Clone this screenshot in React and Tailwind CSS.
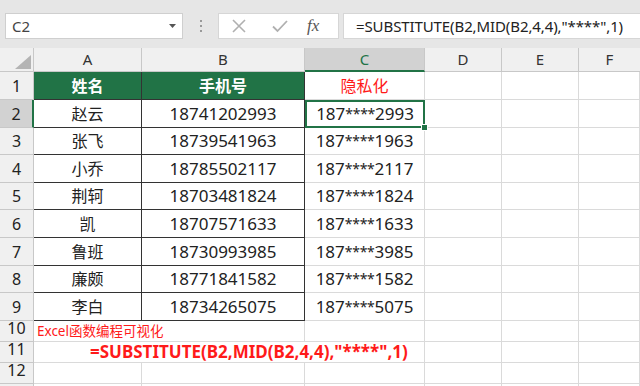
import React from "react";

const font = { fontFamily: '"Noto Sans", "Noto Sans CJK SC", sans-serif' };

const rows = [
  ["赵云", "18741202993", "2993"],
  ["张飞", "18739541963", "1963"],
  ["小乔", "18785502117", "2117"],
  ["荆轲", "18703481824", "1824"],
  ["凯", "18707571633", "1633"],
  ["鲁班", "18730993985", "3985"],
  ["廉颇", "18771841582", "1582"],
  ["李白", "18734265075", "5075"],
];
const heights = ["h-[28px]", "h-[27px]", "h-[28px]", "h-[27px]", "h-[28px]", "h-[28px]", "h-[27px]", "h-[28px]"];

function RowHead({ n, active, h }) {
  return (
    <div
      className={`w-[34px] shrink-0 ${h} flex items-end justify-center pb-[1px] border-r border-b border-[#c8c8c8] text-[16px] text-[#222] ${
        active ? "bg-[#d2d2d2] border-r-[#217346] border-r-2" : "bg-[#f0f0f0]"
      }`}
    >
      {n}
    </div>
  );
}

function Empty({ w, h }) {
  return <div className={`${w} shrink-0 ${h} border-r border-b border-[#dadada] bg-white`} />;
}

function Masked({ tail }) {
  return (
    <span className="whitespace-nowrap">
      187<span className="text-[14px] tracking-[-0.3px] relative top-[-1px]">****</span>
      {tail}
    </span>
  );
}

export default function App() {
  return (
    <div className="w-[640px] h-[386px] overflow-hidden bg-white text-[#111]" style={font}>
      {/* toolbar */}
      <div className="h-[48px] bg-[#e6e6e6] flex items-start pt-[13px] pl-[5px]">
        <div className="w-[178px] h-[26px] bg-white border border-[#cfcfcf] flex items-center justify-between pl-[6px] pr-[6px]">
          <span className="text-[15px] text-[#444]">C2</span>
          <svg width="7" height="4" viewBox="0 0 7 4">
            <path d="M0 0 L7 0 L3.5 4 Z" fill="#555" />
          </svg>
        </div>
        <div className="w-[35px] h-[26px] flex flex-col items-center justify-center gap-[3px]">
          <div className="w-[2px] h-[2px] bg-[#999]" />
          <div className="w-[2px] h-[2px] bg-[#999]" />
          <div className="w-[2px] h-[2px] bg-[#999]" />
        </div>
        <div className="w-[121px] h-[26px] bg-white border border-[#d6d6d6] flex items-center">
          <svg width="14" height="14" viewBox="0 0 14 14" className="ml-[13px]">
            <path d="M1 1 L13 13 M13 1 L1 13" stroke="#b0b0b0" strokeWidth="1.6" />
          </svg>
          <svg width="16" height="14" viewBox="0 0 16 14" className="ml-[26px]">
            <path d="M1 7.5 L5.5 12 L15 2" stroke="#b0b0b0" strokeWidth="1.8" fill="none" />
          </svg>
          <span
            className="ml-[19px] text-[17px] italic text-[#555]"
            style={{ fontFamily: '"Liberation Serif", "DejaVu Serif", serif' }}
          >
            fx
          </span>
        </div>
        <div className="ml-[4px] flex-1 h-[26px] bg-white border border-[#d6d6d6] border-r-0 flex items-center pl-[12px]">
          <span className="text-[15px] text-[#222] tracking-[-0.1px] whitespace-nowrap">
            =SUBSTITUTE(B2,MID(B2,4,4),"****",1)
          </span>
        </div>
      </div>

      {/* column headers */}
      <div className="flex h-[24px] bg-[#f0f0f0] text-[15px] text-[#333]">
        <div className="w-[34px] shrink-0 border-r border-b border-[#c8c8c8] flex items-end justify-end pr-[2px] pb-[2px]">
          <svg width="16" height="14" viewBox="0 0 16 14">
            <path d="M16 0 L16 14 L0 14 Z" fill="#b4b4b4" />
          </svg>
        </div>
        <div className="w-[108px] shrink-0 border-r border-b border-[#c8c8c8] flex items-center justify-center">A</div>
        <div className="w-[163px] shrink-0 border-r border-b border-[#c8c8c8] flex items-center justify-center">B</div>
        <div className="w-[120px] shrink-0 border-r border-b-2 border-[#c8c8c8] border-b-[#217346] bg-[#d2d2d2] flex items-center justify-center text-[#217346]">C</div>
        <div className="w-[77px] shrink-0 border-r border-b border-[#c8c8c8] flex items-center justify-center">D</div>
        <div className="w-[77px] shrink-0 border-r border-b border-[#c8c8c8] flex items-center justify-center">E</div>
        <div className="w-[61px] shrink-0 border-b border-[#c8c8c8] flex items-center justify-center">F</div>
      </div>

      {/* row 1 */}
      <div className="flex h-[28px]">
        <RowHead n={1} h="h-[28px]" />
        <div className="w-[108px] shrink-0 bg-[#217346] border-r border-b border-[#333] flex items-center justify-center text-white font-bold text-[16px]">姓名</div>
        <div className="w-[163px] shrink-0 bg-[#217346] border-r border-b border-[#333] flex items-center justify-center text-white font-bold text-[16px]">手机号</div>
        <div className="w-[120px] shrink-0 border-r border-b border-[#dadada] flex items-center justify-center text-[#ff1a1a] text-[16px]">隐私化</div>
        <Empty w="w-[77px]" h="h-[28px]" />
        <Empty w="w-[77px]" h="h-[28px]" />
        <Empty w="w-[61px]" h="h-[28px]" />
      </div>

      {rows.map((r, i) => {
        const h = heights[i];
        const sel = i === 0;
        return (
          <div key={i} className={`flex ${h}`}>
            <RowHead n={i + 2} active={sel} h={h} />
            <div className={`w-[108px] shrink-0 ${h} border-r border-b border-[#333] flex items-center justify-center text-[16px] text-[#222]`}>{r[0]}</div>
            <div className={`w-[163px] shrink-0 ${h} border-r border-b border-[#333] flex items-center justify-center text-[17px] text-[#222]`}>{r[1]}</div>
            {sel ? (
              <div className={`relative w-[120px] shrink-0 ${h} border-2 border-[#217346] flex items-center justify-center text-[17px] text-[#222]`}>
                <Masked tail={r[2]} />
                <div className="absolute right-[-5px] bottom-[-5px] w-[7px] h-[7px] bg-[#217346] border border-white" />
              </div>
            ) : (
              <div className={`w-[120px] shrink-0 ${h} border-r border-b border-[#dadada] flex items-center justify-center text-[17px] text-[#222]`}>
                <Masked tail={r[2]} />
              </div>
            )}
            <Empty w="w-[77px]" h={h} />
            <Empty w="w-[77px]" h={h} />
            <Empty w="w-[61px]" h={h} />
          </div>
        );
      })}

      {/* row 10 */}
      <div className="flex h-[21px]">
        <RowHead n={10} h="h-[21px]" />
        <div className="w-[271px] shrink-0 h-[21px] border-r border-b border-[#dadada] flex items-center pl-[3px] text-[13.5px] text-[#ff1a1a] whitespace-nowrap">
          Excel函数编程可视化
        </div>
        <Empty w="w-[120px]" h="h-[21px]" />
        <Empty w="w-[77px]" h="h-[21px]" />
        <Empty w="w-[77px]" h="h-[21px]" />
        <Empty w="w-[61px]" h="h-[21px]" />
      </div>

      {/* row 11 */}
      <div className="flex h-[21px]">
        <RowHead n={11} h="h-[21px]" />
        <div className="w-[391px] shrink-0 h-[21px] border-r border-b border-[#dadada] flex items-center pl-[56px] text-[17px] font-bold text-[#ff1a1a] whitespace-nowrap">
          =SUBSTITUTE(B2,MID(B2,4,4),"****",1)
        </div>
        <Empty w="w-[77px]" h="h-[21px]" />
        <Empty w="w-[77px]" h="h-[21px]" />
        <Empty w="w-[61px]" h="h-[21px]" />
      </div>

      {/* row 12 */}
      <div className="flex h-[21px]">
        <RowHead n={12} h="h-[21px]" />
        <Empty w="w-[108px]" h="h-[21px]" />
        <Empty w="w-[163px]" h="h-[21px]" />
        <Empty w="w-[120px]" h="h-[21px]" />
        <Empty w="w-[77px]" h="h-[21px]" />
        <Empty w="w-[77px]" h="h-[21px]" />
        <Empty w="w-[61px]" h="h-[21px]" />
      </div>
      <div className="flex h-[21px]">
        <RowHead n="" h="h-[21px]" />
        <Empty w="w-[108px]" h="h-[21px]" />
        <Empty w="w-[163px]" h="h-[21px]" />
        <Empty w="w-[120px]" h="h-[21px]" />
        <Empty w="w-[77px]" h="h-[21px]" />
        <Empty w="w-[77px]" h="h-[21px]" />
        <Empty w="w-[61px]" h="h-[21px]" />
      </div>
    </div>
  );
}
